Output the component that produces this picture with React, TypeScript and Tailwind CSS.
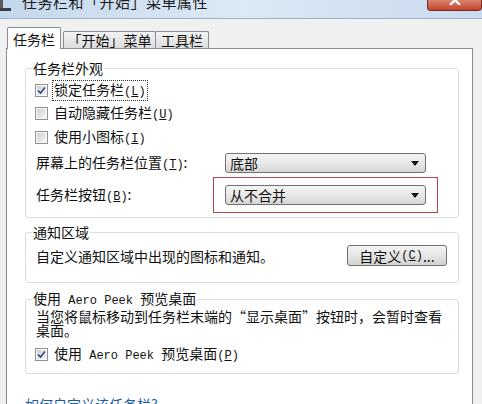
import React from 'react';

const Check: React.FC<{ checked?: boolean }> = ({ checked }) => (
  <span className="w-[13px] h-[13px] shrink-0 border border-[#8e8f8f] bg-white p-[1px] flex">
    <span className="flex-1 bg-gradient-to-br from-[#cfcfcf] to-[#f4f4f4] flex items-center justify-center">
      {checked && (
        <svg width="9" height="9" viewBox="0 0 9 9">
          <path d="M1 4.5 L3.5 7 L8 1.5" stroke="#2f4f8f" strokeWidth="1.7" fill="none" />
        </svg>
      )}
    </span>
  </span>
);

const Combo: React.FC<{ value: string }> = ({ value }) => (
  <div className="w-[201px] h-[20px] border border-[#707070] rounded-[3px] bg-gradient-to-b from-[#f4f4f4] via-[#e9e9e9] to-[#d6d6d6] flex items-center pl-[4px] pr-[6px]">
    <span>{value}</span>
    <svg className="ml-auto" width="8" height="5" viewBox="0 0 8 5">
      <path d="M0 0 H8 L4 5 Z" fill="#111" />
    </svg>
  </div>
);

const Key: React.FC<{ k: string }> = ({ k }) => (
  <span className="font-['Liberation_Mono',monospace] text-[12px]">
    (<span className="underline">{k}</span>)
  </span>
);

const CheckRow: React.FC<{ checked?: boolean; focus?: boolean; children: React.ReactNode; h: string }> = ({
  checked,
  focus,
  children,
  h,
}) => (
  <div className={`flex items-center ml-[-1px] ${h}`}>
    <Check checked={checked} />
    <span className={`ml-[4px] px-[1px] leading-[16px] ${focus ? 'border border-dotted border-[#333]' : 'border border-transparent'}`}>
      {children}
    </span>
  </div>
);

const App: React.FC = () => {
  return (
    <div className="w-[482px] h-[404px] overflow-hidden bg-[#f0f0f0] flex flex-col text-[14px] leading-[16px] text-[#111] font-['Noto_Sans_CJK_SC','Liberation_Sans',sans-serif]">
      {/* title bar */}
      <div className="h-[19px] shrink-0 flex items-start overflow-hidden bg-gradient-to-r from-[#c3d7ec] via-[#dce9f6] to-[#c8daee] border-b border-[#9fb2c6]">
        <svg width="12" height="12" viewBox="0 0 12 12" className="shrink-0">
          <rect x="0" y="0" width="3" height="9" fill="#5a5a5a" />
          <rect x="0" y="8" width="11" height="3" fill="#3c3c3c" />
        </svg>
        <span className="ml-[10px] mt-[-7px] text-[15px] leading-[18px] text-[#1b1b1b] tracking-[0.5px]">
          任务栏和「开始」菜单属性
        </span>
        <div className="ml-auto w-[55px] h-[11px] rounded-b-[4px] border border-t-0 border-[#7a2a1c] bg-gradient-to-b from-[#d9826f] to-[#c2432c] flex justify-center overflow-hidden">
          <svg width="14" height="10" viewBox="0 0 14 10" className="mt-[-5px]">
            <path d="M2 0 L12 10 M12 0 L2 10" stroke="#fff" strokeWidth="2.4" />
          </svg>
        </div>
      </div>

      {/* tabs */}
      <div className="mt-[8px] ml-[7px] h-[21px] flex items-end shrink-0 relative z-10">
        <div className="w-[54px] h-[22px] mb-[-1px] bg-white border border-b-0 border-[#898c95] rounded-t-[2px] flex items-center justify-center">
          任务栏
        </div>
        <div className="ml-[2px] w-[93px] h-[17px] bg-gradient-to-b from-[#f3f3f3] to-[#dcdcdc] border border-b-0 border-[#898c95] rounded-t-[2px] flex items-center justify-center">
          「开始」菜单
        </div>
        <div className="ml-[-1px] w-[54px] h-[17px] bg-gradient-to-b from-[#f3f3f3] to-[#dcdcdc] border border-b-0 border-[#898c95] rounded-t-[2px] flex items-center justify-center">
          工具栏
        </div>
      </div>

      {/* panel */}
      <div className="ml-[6px] w-[467px] flex-1 bg-white border border-[#898c95] pl-[18px] pr-[13px] pt-[11px] flex flex-col">
        {/* group 1 */}
        <fieldset className="border border-[#d5dfe5] rounded-[3px] pl-[10px] pr-[11px] pb-[12px]">
          <legend className="ml-[-4px] px-[1px] leading-[16px]">任务栏外观</legend>
          <div className="mt-[3px]">
            <CheckRow checked focus h="h-[23px]">
              锁定任务栏<Key k="L" />
            </CheckRow>
            <CheckRow h="h-[23px]">
              自动隐藏任务栏<Key k="U" />
            </CheckRow>
            <CheckRow h="h-[24px]">
              使用小图标<Key k="I" />
            </CheckRow>
          </div>
          <div className="mt-[4px] h-[20px] flex items-center">
            <span className="w-[189px]">
              屏幕上的任务栏位置<Key k="T" />:
            </span>
            <Combo value="底部" />
          </div>
          <div className="mt-[12px] h-[20px] flex items-center">
            <span className="w-[189px]">
              任务栏按钮<Key k="B" />:
            </span>
            <div className="relative">
              <Combo value="从不合并" />
              <div className="absolute left-[-12px] right-[-12px] top-[-8px] bottom-[-8px] border border-[#b24a50] pointer-events-none" />
            </div>
          </div>
        </fieldset>

        {/* group 2 */}
        <fieldset className="mt-[6px] border border-[#d5dfe5] rounded-[3px] pl-[10px] pr-[11px] pb-[16px]">
          <legend className="ml-[-4px] px-[1px] leading-[16px]">通知区域</legend>
          <div className="mt-[5px] h-[21px] flex items-center">
            <span>自定义通知区域中出现的图标和通知。</span>
            <button className="ml-auto w-[100px] h-[21px] border border-[#707070] rounded-[3px] bg-gradient-to-b from-[#f3f3f3] via-[#e6e6e6] to-[#d2d2d2] flex items-center justify-center leading-[16px]">
              自定义<Key k="C" />...
            </button>
          </div>
        </fieldset>

        {/* group 3 */}
        <fieldset className="mt-[7px] border border-[#d5dfe5] rounded-[3px] pl-[10px] pr-[11px] pb-[7px]">
          <legend className="ml-[-4px] px-[1px] leading-[16px]">
            使用<span className="font-['Liberation_Mono',monospace] text-[12px] whitespace-pre"> Aero Peek </span>预览桌面
          </legend>
          <p className="leading-[14px]">
            当您将鼠标移动到任务栏末端的“显示桌面”按钮时，会暂时查看
            <br />
            桌面。
          </p>
          <div className="mt-[6px]">
            <CheckRow checked h="h-[23px]">
              使用<span className="font-['Liberation_Mono',monospace] text-[12px] whitespace-pre"> Aero Peek </span>预览桌面<Key k="P" />
            </CheckRow>
          </div>
        </fieldset>

        <a href="#" className="mt-[22px] leading-[16px] text-[#1c5da8]">
          如何自定义该任务栏?
        </a>
      </div>
    </div>
  );
};

export default App;
